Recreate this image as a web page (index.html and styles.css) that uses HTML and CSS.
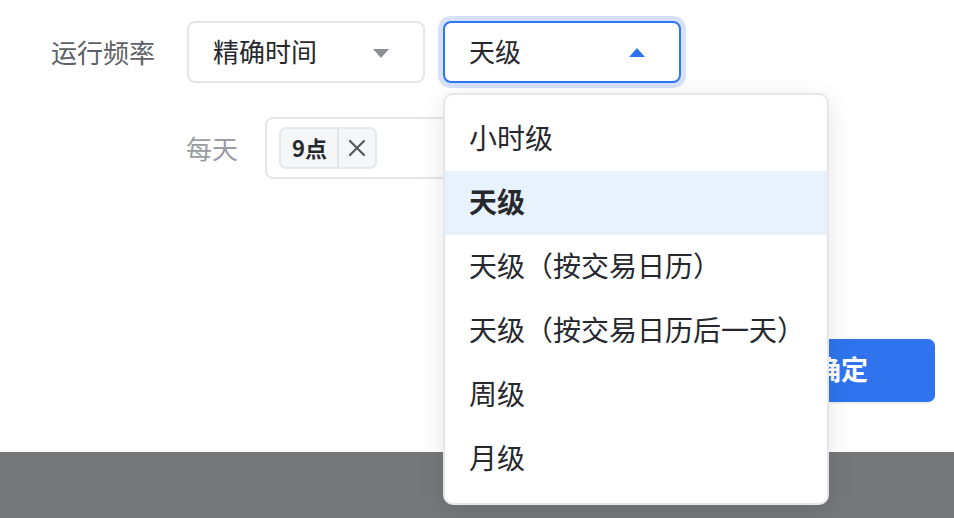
FILE: index.html
```html
<!DOCTYPE html>
<html lang="zh-CN">
<head>
<meta charset="utf-8">
<title>运行频率</title>
<link rel="stylesheet" href="styles.css">
</head>
<body>
<div class="page">
  <div class="panel">
    <div class="row row-main">
      <div class="label">运行频率</div>
      <div class="select">
        <span class="select-text">精确时间</span>
        <span class="caret caret-down"></span>
      </div>
      <div class="select-wrap">
        <div class="select select-active">
          <span class="select-text">天级</span>
          <span class="caret caret-up"></span>
        </div>
        <ul class="menu">
          <li class="menu-item">小时级</li>
          <li class="menu-item is-selected">天级</li>
          <li class="menu-item">天级（按交易日历）</li>
          <li class="menu-item">天级（按交易日历后一天）</li>
          <li class="menu-item">周级</li>
          <li class="menu-item">月级</li>
        </ul>
      </div>
    </div>
    <div class="row row-sub">
      <div class="sublabel">每天</div>
      <div class="tag-input">
        <span class="tag"><span class="tag-text">9点</span><span class="tag-close"><svg width="18" height="18" viewBox="0 0 18 18"><path d="M2 2 L16 16 M16 2 L2 16" stroke="#55585e" stroke-width="2.2" stroke-linecap="round" fill="none"/></svg></span></span>
      </div>
    </div>
    <div class="actions">
      <button class="btn-primary">确定</button>
    </div>
  </div>
  <div class="footer"></div>
</div>
</body>
</html>
```

FILE: styles.css
```css
* { box-sizing: border-box; }
html, body {
  margin: 0;
  padding: 0;
  background: #ffffff;
  font-family: "Noto Sans CJK SC", "Noto Sans", sans-serif;
  color: #24262b;
}
.page {
  width: 954px;
  height: 518px;
  display: flex;
  flex-direction: column;
  overflow: hidden;
}
.panel {
  height: 452px;
  padding-top: 21px;
  display: flex;
  flex-direction: column;
}
.row { display: flex; align-items: center; }
.row-main { padding-left: 51px; }
.label {
  width: 104px;
  font-size: 26px;
  line-height: 60px;
  color: #5c5f66;
  margin-right: 32px;
  white-space: nowrap;
}
.select {
  width: 238px;
  height: 62px;
  border: 2px solid #e4e5ea;
  border-radius: 8px;
  padding: 0 34px 2px 24px;
  display: flex;
  align-items: center;
  justify-content: space-between;
  background: #fff;
}
.select-text { font-size: 26px; line-height: 1; color: #26282d; }
.caret { width: 0; height: 0; border-left: 8px solid transparent; border-right: 8px solid transparent; }
.caret-down { border-top: 9px solid #8a8d94; margin-top: 4px; }
.caret-up { border-bottom: 9px solid #2f74ee; margin-top: 2px; }
.select-wrap { position: relative; margin-left: 18px; }
.select-active {
  border-color: #3175ef;
  box-shadow: 0 0 0 5px #d6e2fb;
}
.menu {
  position: absolute;
  left: 0;
  top: 72px;
  width: 386px;
  margin: 0;
  padding: 12px 0;
  list-style: none;
  background: #fff;
  border: 2px solid #e6e6ea;
  border-radius: 10px;
  box-shadow: 0 6px 24px rgba(0, 0, 0, 0.10);
  z-index: 10;
}
.menu-item {
  height: 64px;
  padding: 0 0 4px 24px;
  display: flex;
  align-items: center;
  font-size: 28px;
  color: #26282d;
  white-space: nowrap;
}
.menu-item.is-selected {
  background: #e8f2fd;
  font-weight: 700;
}
.row-sub { margin-top: 34px; padding-left: 186px; }
.sublabel {
  font-size: 26px;
  color: #9a9ca1;
  width: 52px;
  margin-right: 27px;
  line-height: 58px;
}
.tag-input {
  width: 416px;
  height: 62px;
  border: 2px solid #e4e5ea;
  border-radius: 8px;
  padding: 0 12px;
  display: flex;
  align-items: center;
}
.tag {
  height: 42px;
  display: flex;
  align-items: stretch;
  background: #f5f6f8;
  border: 2px solid #e6e7eb;
  border-radius: 7px;
}
.tag-text {
  display: flex;
  align-items: center;
  padding: 0 10px 2px 11px;
  font-size: 22px;
  font-weight: 700;
  color: #26282d;
  border-right: 2px solid #e2e3e7;
}
.tag-close {
  display: flex;
  align-items: center;
  padding: 0 9px 0 9px;
}
.tag-close svg { display: block; }
.actions {
  margin-top: 160px;
  padding-left: 743px;
}
.btn-primary {
  width: 192px;
  height: 63px;
  border: none;
  border-radius: 7px;
  background: #2f74ee;
  color: #fff;
  font-family: "Noto Sans CJK SC", sans-serif;
  font-size: 27px;
  font-weight: 700;
  padding: 0 0 4px 4px;
  box-shadow: 0 2px 0 rgba(0, 0, 0, 0.06);
}
.footer {
  height: 66px;
  background: #76777b;
}
```
